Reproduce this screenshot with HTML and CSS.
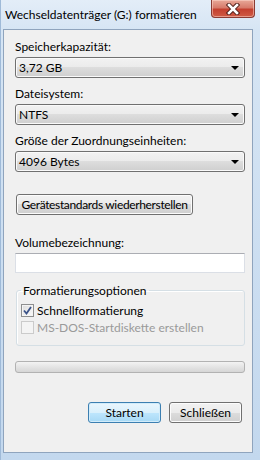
FILE: index.html
```html
<!DOCTYPE html>
<html lang="de">
<head>
  <meta charset="UTF-8">
  <meta name="viewport" content="width=device-width, initial-scale=1.0">
  <title>Formatieren</title>
  <link rel="stylesheet" href="styles.css">
</head>
<body>

  <div class="window">
    <!-- Title bar -->
    <div class="titlebar">
      <span class="title">Wechseldatenträger (G:) formatieren</span>
      <div class="close-btn">
        <svg width="16" height="12" viewBox="0 0 16 12">
          <path d="M4 2 L12 10 M12 2 L4 10" stroke="#4a1a14" stroke-width="4.4" stroke-linecap="square" fill="none"/>
          <path d="M4 2 L12 10 M12 2 L4 10" stroke="#ffffff" stroke-width="2.6" stroke-linecap="square" fill="none"/>
        </svg>
      </div>
    </div>

    <div class="panel">
      <span class="field-label">Speicherkapazität:</span>
      <div class="combo"><span>3,72 GB</span><span class="arrow"></span></div>

      <span class="field-label">Dateisystem:</span>
      <div class="combo"><span>NTFS</span><span class="arrow"></span></div>

      <span class="field-label">Größe der Zuordnungseinheiten:</span>
      <div class="combo"><span>4096 Bytes</span><span class="arrow"></span></div>

      <div class="restore-row">
        <button class="button restore-btn">Gerätestandards wiederherstellen</button>
      </div>

      <span class="field-label volume-label">Volumebezeichnung:</span>
      <input type="text" class="text-input">

      <fieldset class="group">
        <legend>Formatierungsoptionen</legend>
        <div class="check-row">
          <span class="checkbox">
            <svg width="11" height="11" viewBox="0 0 11 11">
              <path d="M2 5.5 L4.5 8.5 L9 2" stroke="#3a5288" stroke-width="1.8" fill="none"/>
            </svg>
          </span>
          <span>Schnellformatierung</span>
        </div>
        <div class="check-row disabled">
          <span class="checkbox"></span>
          <span>MS-DOS-Startdiskette erstellen</span>
        </div>
      </fieldset>

      <div class="progress"></div>

      <div class="button-row">
        <button class="button default-btn">Starten</button>
        <button class="button">Schließen</button>
      </div>
    </div>
  </div>

</body>
</html>
```

FILE: styles.css
```css
body {
  margin: 0;
  font-family: "Segoe UI", Lato, sans-serif;
  font-size: 12px;
  color: #000;
}
.window {
  width: 260px;
  height: 460px;
  display: flex;
  flex-direction: column;
  background: linear-gradient(#e3edf8 0px, #d6e5f4 30px, #c3d8ee 460px);
  box-shadow: inset 1px 0 0 #9fbad8;
}
.titlebar {
  height: 29px;
  display: flex;
  justify-content: space-between;
  align-items: center;
}
.title {
  padding-left: 5px;
  margin-top: -1px;
}
.close-btn {
  align-self: flex-start;
  width: 44px;
  height: 18px;
  margin-right: 5px;
  box-sizing: border-box;
  border: 1px solid #8a3b33;
  border-top: none;
  border-radius: 0 0 4px 4px;
  background: linear-gradient(#e8a898 0%, #d77b6b 45%, #c4402f 55%, #cf5b45 100%);
  box-shadow: inset 0 0 0 1px rgba(255, 220, 210, 0.5);
  display: flex;
  align-items: center;
  justify-content: center;
}
.panel {
  flex: 1;
  margin: 0 7px 7px 3px;
  padding: 9px 7px 0 11px;
  background: #f0f0f0;
  border: 1px solid #8fa4bd;
  display: flex;
  flex-direction: column;
}
.field-label {
  line-height: 15px;
  margin-bottom: 3px;
}
.combo {
  height: 21px;
  box-sizing: border-box;
  border: 1px solid #707070;
  border-radius: 3px;
  background: linear-gradient(#f2f2f2 0%, #ebebeb 50%, #dddddd 50%, #cfcfcf 100%);
  box-shadow: inset 0 0 0 1px #fafafa;
  display: flex;
  align-items: center;
  justify-content: space-between;
  padding: 0 5px 0 3px;
  margin-bottom: 8px;
}
.arrow {
  width: 0;
  height: 0;
  border-left: 4px solid transparent;
  border-right: 4px solid transparent;
  border-top: 4px solid #000;
}
.restore-row {
  margin-top: 14px;
  display: flex;
}
.button {
  height: 21px;
  box-sizing: border-box;
  font-family: inherit;
  font-size: 12px;
  color: #000;
  white-space: nowrap;
  border: 1px solid #707070;
  border-radius: 3px;
  background: linear-gradient(#f2f2f2 0%, #ebebeb 50%, #dddddd 50%, #cfcfcf 100%);
  box-shadow: inset 0 0 0 1px #fcfcfc;
  padding: 0;
}
.restore-btn {
  margin-left: 1px;
  width: 177px;
  letter-spacing: -0.35px;
}
.volume-label {
  margin-top: 20px;
}
.text-input {
  height: 20px;
  box-sizing: border-box;
  width: 100%;
  margin: 0;
  border: 1px solid #dbdfe6;
  border-top-color: #abadb3;
  background: #fff;
}
.group {
  margin: 10px 0 0 1px;
  padding: 1px 4px 9px 4px;
  border: 1px solid #d5dfe5;
  border-radius: 3px;
  box-shadow: inset 1px 1px 0 #fff;
}
.group legend {
  padding: 0 2px;
  line-height: 15px;
}
.check-row {
  display: flex;
  align-items: center;
  gap: 3px;
  height: 17px;
}
.check-row:first-of-type {
  margin-top: 3px;
}
.checkbox {
  width: 13px;
  height: 13px;
  box-sizing: border-box;
  border: 1px solid #8e8f8f;
  background: linear-gradient(135deg, #dcdcdc, #fbfbfb);
  box-shadow: inset 0 0 0 1px #f4f4f4;
  display: flex;
  align-items: center;
  justify-content: center;
}
.disabled {
  color: #9a9a9a;
}
.disabled .checkbox {
  border-color: #cbcbcb;
  background: #f4f4f4;
  box-shadow: none;
}
.progress {
  margin-top: 15px;
  height: 12px;
  box-sizing: border-box;
  border: 1px solid #b2b2b2;
  border-radius: 3px;
  background: linear-gradient(#f3f3f3, #e4e4e4 50%, #d6d6d6);
}
.button-row {
  margin-top: 29px;
  display: flex;
  justify-content: flex-end;
  gap: 8px;
  padding-right: 3px;
}
.button-row .button {
  width: 73px;
}
.default-btn {
  border-color: #3c7fb1;
  background: linear-gradient(#eaf6fd 0%, #d9f0fc 50%, #bee6fd 50%, #a7d9f5 100%);
  box-shadow: inset 0 0 0 1px #d2ecfa;
}
```
